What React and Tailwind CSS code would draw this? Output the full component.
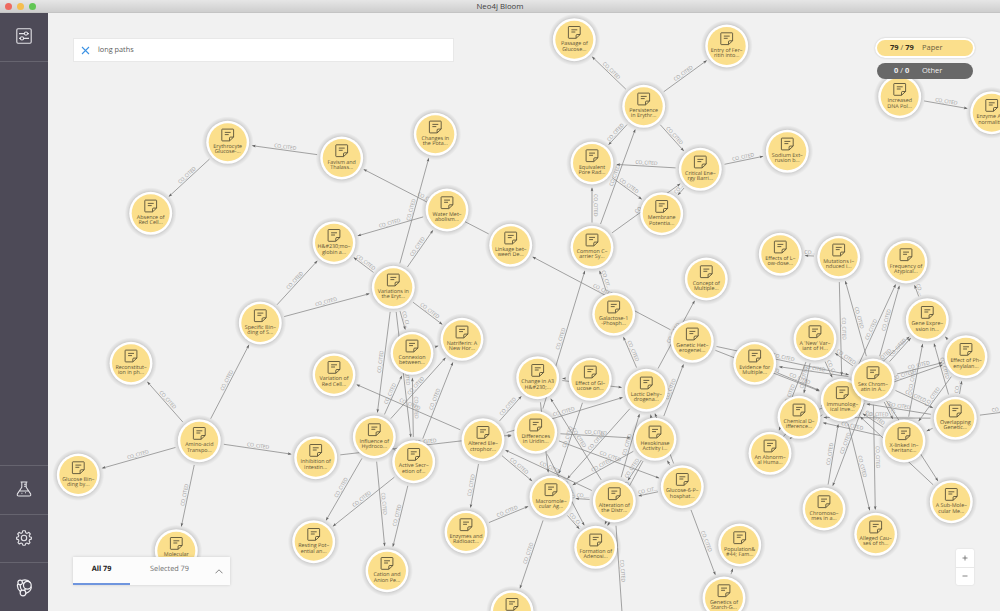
import React from 'react';

const NODES = {
  ery: [227.7, 142.3, 'Erythrocyte', 'Glucose-...'],
  abs: [150.7, 213.3, 'Absence of', 'Red Cell...'],
  fav: [341.7, 158, 'Favism and', 'Thalass...'],
  chg: [435.3, 134.3, 'Changes in', 'the Pota...'],
  wat: [447, 210, 'Water Met–', 'abolism...'],
  hem: [334, 242.7, 'H&#230;mo–', 'globin a...'],
  vari: [393.3, 287.3, 'Variations in', 'the Eryt...'],
  link: [510.7, 245.3, 'Linkage bet–', 'ween De...'],
  nat: [462, 339.3, 'Natriferin: A', 'New Hor...'],
  conn: [412, 353.3, 'Connexion', 'between...'],
  spec: [260.3, 323, 'Specific Bin–', 'ding of S...'],
  rec: [131, 363.3, 'Reconstitut–', 'ion in ph...'],
  amino: [199.3, 440.7, 'Amino-acid', 'Transpo...'],
  gbin: [78.3, 475, 'Glucose Bin–', 'ding by...'],
  mol: [176.3, 550.7, 'Molecular', 'Basis of...'],
  inh: [315.7, 457.7, 'Inhibition of', 'Intestin...'],
  vred: [334, 374.7, 'Variation of', 'Red Cell...'],
  infl: [374.3, 437, 'Influence of', 'Hydroco...'],
  act: [413.7, 461.7, 'Active Secr–', 'etion of...'],
  alt: [483, 439.7, 'Altered Ele–', 'ctrophor...'],
  a3: [537.7, 377.7, 'Change in A3', 'H&#230;...'],
  diff: [535.7, 432.3, 'Differences', 'in Uridin...'],
  effg: [590.3, 379.3, 'Effect of Gl–', 'ucose on...'],
  gal: [613.7, 314.3, 'Galactose-1', '-Phosph...'],
  lac: [646.3, 390.3, 'Lactic Dehy–', 'drogena...'],
  hex: [655, 439.3, 'Hexokinase', 'Activity i...'],
  con: [706.3, 279, 'Concept of', 'Multiple...'],
  gen: [692.3, 341.3, 'Genetic Het–', 'erogenei...'],
  g6: [682.3, 486.7, 'Glucose-6-P–', 'hosphat...'],
  mac: [551, 497, 'Macromole–', 'cular Ag...'],
  form: [595.7, 547.3, 'Formation of', 'Adenosi...'],
  dist: [614.3, 501, 'Alteration of', 'the Distr...'],
  pop: [739.7, 545, 'Population&', '#44; Fam...'],
  star: [724, 598, 'Genetics of', 'Starch-G...'],
  bot: [512, 611.7, '', ''],
  rest: [313.7, 541.7, 'Resting Pot–', 'ential an...'],
  cat: [387, 570.7, 'Cation and', 'Anion Pe...'],
  enz: [466, 532, 'Enzymes and', 'Radioact...'],
  pas: [574.3, 39.7, 'Passage of', 'Glucose...'],
  ent: [726.7, 46, 'Entry of Fer–', 'ritin into...'],
  per: [643.7, 106.3, 'Persistence', 'in Erythr...'],
  equ: [592, 163, 'Equivalent', 'Pore Rad...'],
  crit: [700.3, 169.3, 'Critical Ene–', 'rgy Barri...'],
  mem: [661.7, 213.7, 'Membrane', 'Potentia...'],
  com: [592, 247.3, 'Common C–', 'arrier Sy...'],
  sod: [787.3, 151.3, 'Sodium Ext–', 'rusion b...'],
  inc: [899.7, 96.7, 'Increased', 'DNA Pol...'],
  enza: [991.7, 112.7, 'Enzyme Ab–', 'normaliti...'],
  low: [780.3, 254.3, 'Effects of L–', 'ow-dose...'],
  mut: [838.7, 257.3, 'Mutations i–', 'nduced i...'],
  freq: [906, 262, 'Frequency of', 'Atypical...'],
  gene: [927.3, 319.7, 'Gene Expre–', 'ssion in...'],
  phe: [966, 356.7, 'Effect of Ph–', 'enylalan...'],
  anew: [815, 339, "A 'New' Var–", 'iant of H...'],
  evi: [754.7, 363.3, 'Evidence for', 'Multiple...'],
  abn: [770, 453.3, 'An Abnorm–', 'al Huma...'],
  chem: [799, 417.3, 'Chemical D–', 'ifference...'],
  imm: [842.3, 400, 'Immunolog–', 'ical Inve...'],
  sex: [873, 380, 'Sex Chrom–', 'atin in A...'],
  over: [955.3, 418.3, 'Overlapping', 'Genetic...'],
  xl: [904, 441, 'X-linked In–', 'heritanc...'],
  sub: [951.3, 501.7, 'A Sub-Mole–', 'cular Me...'],
  chro: [824, 509, 'Chromoso–', 'mes in a...'],
  alle: [875.7, 534.3, 'Alleged Cau–', 'ses of th...'],
  offBottom: [624, 641, '', ''],
  offRight: [1051, 406, '', ''],
};

const EDGES = `ery>abs fav>ery link>fav gen>link wat>hem vari>hem vari>chg vari>wat spec>hem spec>vari
vari>conn vari>nat vari>infl vari>act conn>nat amino>spec amino>rec amino>gbin amino>mol amino>inh
inh>diff act>infl alt>lac alt>diff alt>vred alt>a3 alt>mac alt>enz enz>mac infl>rest infl>cat infl>conn
infl>nat act>rest act>cat act>conn act>nat dist>alt mac>bot mac>form diff>form diff>hex diff>g6 dist>a3
effg>mac lac>mac hex>mac effg>a3 a3>lac diff>com a3>mac hex>gen lac>con lac>gal hex>lac g6>lac g6>hex
dist>lac hex>dist hex>form dist>form g6>dist dist>mac dist>offBottom g6>star star>pop gal>com gen>imm
gen>sex sex>evi evi>imm anew>imm anew>chem anew>abn sex>anew mut>imm mut>low sex>mut imm>freq sex>freq
gene>freq imm>gene sex>gene phe>gene over>gene xl>gene sex>phe imm>phe over>phe phe>xl sex>over over>imm
over>chem xl>chem over>xl xl>imm sex>sub sex>xl sub>imm sex>chem imm>chem sex>chro chro>imm imm>alle
sex>alle imm>abn chem>abn over>offRight inc>enza com>equ com>per com>crit equ>mem per>equ per>crit
per>pas per>ent crit>equ crit>mem crit>sod`
  .split(/\s+/)
  .map((pair) => pair.split('>'));

function labelFor(length) {
  if (length >= 22) return 'CO_CITED';
  if (length >= 20.3) return 'CO_CIT...';
  if (length >= 17) return 'CO_CI...';
  if (length >= 12) return 'CO_...';
  if (length >= 9) return 'CO...';
  return '';
}

function Edge({ from, to }) {
  const [ax, ay] = NODES[from];
  const [bx, by] = NODES[to];
  const d = Math.hypot(bx - ax, by - ay);
  const ux = (bx - ax) / d;
  const uy = (by - ay) / d;
  const angle = (Math.atan2(uy, ux) * 180) / Math.PI;
  let upright = angle;
  if (upright > 90) upright -= 180;
  if (upright <= -90) upright += 180;
  const ex = bx - ux * 24.3;
  const ey = by - uy * 24.3;
  const label = labelFor(d - 48.5);
  return (
    <g>
      <line x1={ax + ux * 24.8} y1={ay + uy * 24.8} x2={ex - ux} y2={ey - uy} stroke="#858585" strokeWidth="0.75" />
      <path d="M0 0L-3.9 -1.3L-3.2 0L-3.9 1.3Z" fill="#666" transform={`translate(${ex} ${ey}) rotate(${angle})`} />
      {label && (
        <text
          transform={`translate(${(ax + bx) / 2} ${(ay + by) / 2}) rotate(${upright})`}
          y="-1.7"
          textAnchor="middle"
          fontSize="5.1"
          letterSpacing="-0.15"
          fill="#a0a0a0"
        >
          {label}
        </text>
      )}
    </g>
  );
}

function Node({ data }) {
  const [x, y, first, second] = data;
  return (
    <g transform={`translate(${x} ${y})`}>
      <circle r="26" cy="0.3" fill="url(#halo)" />
      <circle r="21.5" fill="#fff" />
      <circle r="19" fill="#fbdf8c" />
      <path
        d="M-5.3 -13.2H5.3Q5.9 -13.2 5.9 -12.6V-5.2L1.8 -1.4H-5.3Q-5.9 -1.4 -5.9 -2V-12.6Q-5.9 -13.2 -5.3 -13.2ZM1.8 -1.6V-4.2Q1.8 -5.2 2.8 -5.2H5.8M-2.9 -9.9H3M-2.9 -7.7H1"
        fill="none"
        stroke="#45402f"
        strokeWidth="0.8"
        strokeLinejoin="round"
      />
      {first && <text y="5.6" textAnchor="middle" fontSize="5.4" fill="#5c5336">{first}</text>}
      {second && <text y="11.2" textAnchor="middle" fontSize="5.4" fill="#5c5336">{second}</text>}
    </g>
  );
}

function Graph() {
  return (
    <svg className="absolute top-0 left-0" width="952" height="598" viewBox="48 13 952 598" textRendering="geometricPrecision">
      <defs>
        <radialGradient id="halo" gradientUnits="userSpaceOnUse" cx="0" cy="0" r="26">
          <stop offset="0.8" stopColor="#000" stopOpacity="0.18" />
          <stop offset="0.88" stopColor="#000" stopOpacity="0.09" />
          <stop offset="1" stopColor="#000" stopOpacity="0" />
        </radialGradient>
      </defs>
      {EDGES.map(([a, b]) => <Edge key={a + b} from={a} to={b} />)}
      {Object.entries(NODES).map(([id, data]) => <Node key={id} data={data} />)}
    </svg>
  );
}

function SlidersIcon() {
  return (
    <svg width="16" height="16" viewBox="0 0 16 16" fill="none" stroke="#e4e3e8" strokeWidth="1.1">
      <rect x="0.8" y="0.8" width="14.4" height="14.4" rx="1.2" />
      <path d="M3 5.6H8.4M11.6 5.6H13M3 10.4H4.4M7.6 10.4H13" />
      <circle cx="10" cy="5.6" r="1.6" />
      <circle cx="6" cy="10.4" r="1.6" />
    </svg>
  );
}

function FlaskIcon() {
  return (
    <svg width="16" height="16" viewBox="0 0 16 16" fill="none" stroke="#e4e3e8" strokeWidth="1.05" strokeLinejoin="round">
      <path d="M4.6 1H11.4M5.8 1V6.3L1.4 12.9Q0.7 15 2.8 15H13.2Q15.3 15 14.6 12.9L10.2 6.3V1M3.5 10H12.5M8 3.2H10M8 5.3H10" />
      <path d="M5.4 12.3H6.4M9 11.8H10" />
    </svg>
  );
}

function GearIcon() {
  return (
    <svg width="16" height="16" viewBox="0 0 16 16" fill="none" stroke="#e4e3e8" strokeWidth="1.1" strokeLinejoin="round">
      <path d="M6.7 0.8H9.3L9.8 2.8L11.1 3.4L12.9 2.3L14.3 3.9L13.2 5.6L13.6 6.8L15.4 7.3V9.1L13.6 9.6L13.1 10.9L14 12.6L12.6 14L10.9 13L9.8 13.4L9.2 15.2H6.8L6.2 13.4L5.1 13L3.4 14L2 12.6L2.9 10.9L2.4 9.6L0.6 9.1V7.3L2.4 6.8L2.8 5.6L1.7 3.9L3.1 2.3L4.9 3.4L6.2 2.8Z" />
      <circle cx="8" cy="8" r="2.7" />
    </svg>
  );
}

function BloomIcon() {
  return (
    <svg width="17" height="19" viewBox="0 0 18 20" fill="none" stroke="#f0eff3" strokeWidth="1.3">
      <circle cx="4.4" cy="4.6" r="2.4" />
      <circle cx="12" cy="7.6" r="4.1" />
      <circle cx="7.4" cy="15.8" r="3" />
      <path d="M6 2.6Q12 0.6 15.4 5M16.3 9Q16 14.6 10.4 16.2M1.8 6.2Q0.6 11 4.6 14.2M4.4 7.2Q4.6 11 6 12.8M10.2 11.2L8.8 13M6.8 5L8.4 5.8" />
    </svg>
  );
}

function SideItem({ children, className }) {
  return (
    <div className={`flex w-full items-center justify-center border-[#66646f] ${className}`}>{children}</div>
  );
}

export default function App() {
  return (
    <div className="flex h-[611px] w-[1000px] flex-col overflow-hidden bg-[#f1f1f1] font-['Open_Sans','Noto_Sans',sans-serif]">
      <header className="grid h-[13px] shrink-0 grid-cols-3 items-center border-b border-[#c4c4c4] bg-linear-to-b from-[#e6e6e6] to-[#cecece] px-[5px]">
        <div className="flex gap-[5px]">
          <span className="size-[7px] rounded-full bg-[#ee6a5f]" />
          <span className="size-[7px] rounded-full bg-[#f5be4f]" />
          <span className="size-[7px] rounded-full bg-[#61c654]" />
        </div>
        <h1 className="pt-px text-center text-[7.8px] leading-none text-[#404040]">Neo4j Bloom</h1>
      </header>
      <div className="flex min-h-0 flex-1">
        <nav className="flex w-12 shrink-0 flex-col bg-[#4d4a57]">
          <SideItem className="h-[49px] border-b pb-[2px]"><SlidersIcon /></SideItem>
          <div className="flex-1" />
          <SideItem className="h-[49px] border-t pb-[2px]"><FlaskIcon /></SideItem>
          <SideItem className="h-12 border-t pb-[2px]"><GearIcon /></SideItem>
          <SideItem className="h-[49px] border-t"><BloomIcon /></SideItem>
        </nav>
        <main className="relative flex min-w-0 flex-1 flex-col justify-between">
          <Graph />
          <div className="relative flex items-start justify-between pt-[25px] pr-[25px] pl-[25px]">
            <div className="flex h-6 w-[381px] items-center gap-2 border border-[#e8e8e8] bg-white pl-[7px]">
              <svg width="9" height="9" viewBox="0 0 9 9" stroke="#3d93e4" strokeWidth="1.1">
                <path d="M1 1L8 8M8 1L1 8" />
              </svg>
              <span className="text-[7.3px] text-[#5c5c5c] [text-rendering:geometricPrecision]">long paths</span>
            </div>
            <div className="flex flex-col gap-[5px] text-[7.5px] leading-none">
              <div className="flex h-5 w-[100px] items-center rounded-full border-2 border-white bg-[#fbdf8c] pl-[13px] text-[#6a603f] shadow-[0_0_2px_rgba(0,0,0,0.2)]">
                <span className="w-[32px]"><b className="text-[#332e1c]">79</b> / <b className="text-[#332e1c]">79</b></span>
                <span>Paper</span>
              </div>
              <div className="mx-[2px] flex h-4 items-center rounded-full bg-[#686868] pl-[17px] text-[#f0f0f0]">
                <span className="w-[28px]"><b>0</b> / <b>0</b></span>
                <span>Other</span>
              </div>
            </div>
          </div>
          <div className="relative flex items-end justify-between pr-[26px] pb-[26px] pl-[25px]">
            <div className="flex h-7 w-[157px] bg-[#fcfcfc] text-[7.3px] text-[#707070] shadow-[0_0_3px_rgba(0,0,0,0.15)] [text-rendering:geometricPrecision]">
              <div className="flex w-[57px] items-center justify-center border-b-2 border-[#6f95de] pb-[1px] font-bold text-[#222]">All 79</div>
              <div className="flex flex-1 items-center justify-center pr-[6px] pb-[3px]">Selected 79</div>
              <div className="flex w-[15px] items-center">
                <svg width="8" height="5" viewBox="0 0 8 5" fill="none" stroke="#666" strokeWidth="0.8"><path d="M0.5 4.3L4 0.8L7.5 4.3" /></svg>
              </div>
            </div>
            <div className="flex h-9 w-[18px] flex-col rounded-[2px] bg-white shadow-[0_0_2px_rgba(0,0,0,0.12)]">
              <div className="flex flex-1 items-center justify-center border-b border-[#e8e8e8]">
                <svg width="6" height="6" viewBox="0 0 6 6" stroke="#666" strokeWidth="0.8"><path d="M0.5 3H5.5M3 0.5V5.5" /></svg>
              </div>
              <div className="flex flex-1 items-center justify-center">
                <svg width="6" height="6" viewBox="0 0 6 6" stroke="#666" strokeWidth="0.8"><path d="M0.5 3H5.5" /></svg>
              </div>
            </div>
          </div>
        </main>
      </div>
    </div>
  );
}
